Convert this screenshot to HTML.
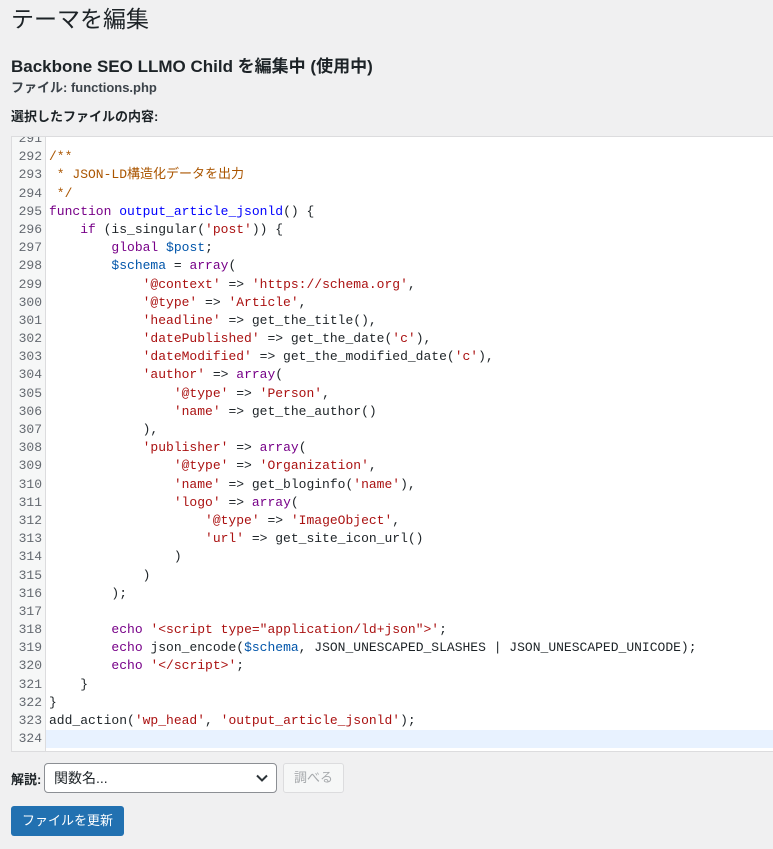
<!DOCTYPE html>
<html><head><meta charset="utf-8">
<style>
body{margin:0;background:#f0f0f1;width:773px;height:849px;overflow:hidden;font-family:"Liberation Sans","Noto Sans CJK JP",sans-serif;color:#1d2327;position:relative}
.a{position:absolute;white-space:nowrap}
h1{position:absolute;left:11px;top:3px;margin:0;font-size:23px;font-weight:400;line-height:32px}
.ed{position:absolute;left:11px;top:136px;width:770px;height:614px;background:#fff;border:1px solid #dcdcde;overflow:hidden}
.gut{position:absolute;left:0;top:0;width:33px;height:100%;background:#f6f7f7;border-right:1px solid #dcdcde}
.code{position:absolute;left:0;right:0;top:-7px;font-family:"Liberation Mono",monospace;font-size:13px;line-height:18.2px}
.ln{display:flex;height:18.2px;white-space:pre;width:100%}
.n{width:30px;text-align:right;color:#646970;flex:none}
.t{padding-left:7px}
.hl{background:#e8f2ff;margin-left:4px}
.c{color:#a50}.k{color:#708}.d{color:#00f}.s{color:#a11}.v{color:#05a}
</style></head><body>
<h1>テーマを編集</h1>
<div class="a" style="left:11px;top:52px;font-size:17px;font-weight:700">Backbone SEO LLMO Child を編集中 (使用中)</div>
<div class="a" style="left:11px;top:77px;font-size:13px;font-weight:700;color:#3c434a">ファイル: functions.php</div>
<div class="a" style="left:11px;top:106px;font-size:13px;font-weight:700">選択したファイルの内容:</div>
<div class="ed"><div class="gut"></div><div class="code">
<div class="ln"><span class="n">291</span><span class="t"></span></div>
<div class="ln"><span class="n">292</span><span class="t c">/**</span></div>
<div class="ln"><span class="n">293</span><span class="t c"> * JSON-LD構造化データを出力</span></div>
<div class="ln"><span class="n">294</span><span class="t c"> */</span></div>
<div class="ln"><span class="n">295</span><span class="t"><span class="k">function</span> <span class="d">output_article_jsonld</span>() {</span></div>
<div class="ln"><span class="n">296</span><span class="t">    <span class="k">if</span> (is_singular(<span class="s">'post'</span>)) {</span></div>
<div class="ln"><span class="n">297</span><span class="t">        <span class="k">global</span> <span class="v">$post</span>;</span></div>
<div class="ln"><span class="n">298</span><span class="t">        <span class="v">$schema</span> = <span class="k">array</span>(</span></div>
<div class="ln"><span class="n">299</span><span class="t">            <span class="s">'@context'</span> =&gt; <span class="s">'https://schema.org'</span>,</span></div>
<div class="ln"><span class="n">300</span><span class="t">            <span class="s">'@type'</span> =&gt; <span class="s">'Article'</span>,</span></div>
<div class="ln"><span class="n">301</span><span class="t">            <span class="s">'headline'</span> =&gt; get_the_title(),</span></div>
<div class="ln"><span class="n">302</span><span class="t">            <span class="s">'datePublished'</span> =&gt; get_the_date(<span class="s">'c'</span>),</span></div>
<div class="ln"><span class="n">303</span><span class="t">            <span class="s">'dateModified'</span> =&gt; get_the_modified_date(<span class="s">'c'</span>),</span></div>
<div class="ln"><span class="n">304</span><span class="t">            <span class="s">'author'</span> =&gt; <span class="k">array</span>(</span></div>
<div class="ln"><span class="n">305</span><span class="t">                <span class="s">'@type'</span> =&gt; <span class="s">'Person'</span>,</span></div>
<div class="ln"><span class="n">306</span><span class="t">                <span class="s">'name'</span> =&gt; get_the_author()</span></div>
<div class="ln"><span class="n">307</span><span class="t">            ),</span></div>
<div class="ln"><span class="n">308</span><span class="t">            <span class="s">'publisher'</span> =&gt; <span class="k">array</span>(</span></div>
<div class="ln"><span class="n">309</span><span class="t">                <span class="s">'@type'</span> =&gt; <span class="s">'Organization'</span>,</span></div>
<div class="ln"><span class="n">310</span><span class="t">                <span class="s">'name'</span> =&gt; get_bloginfo(<span class="s">'name'</span>),</span></div>
<div class="ln"><span class="n">311</span><span class="t">                <span class="s">'logo'</span> =&gt; <span class="k">array</span>(</span></div>
<div class="ln"><span class="n">312</span><span class="t">                    <span class="s">'@type'</span> =&gt; <span class="s">'ImageObject'</span>,</span></div>
<div class="ln"><span class="n">313</span><span class="t">                    <span class="s">'url'</span> =&gt; get_site_icon_url()</span></div>
<div class="ln"><span class="n">314</span><span class="t">                )</span></div>
<div class="ln"><span class="n">315</span><span class="t">            )</span></div>
<div class="ln"><span class="n">316</span><span class="t">        );</span></div>
<div class="ln"><span class="n">317</span><span class="t"></span></div>
<div class="ln"><span class="n">318</span><span class="t">        <span class="k">echo</span> <span class="s">'&lt;script type="application/ld+json"&gt;'</span>;</span></div>
<div class="ln"><span class="n">319</span><span class="t">        <span class="k">echo</span> json_encode(<span class="v">$schema</span>, JSON_UNESCAPED_SLASHES | JSON_UNESCAPED_UNICODE);</span></div>
<div class="ln"><span class="n">320</span><span class="t">        <span class="k">echo</span> <span class="s">'&lt;/script&gt;'</span>;</span></div>
<div class="ln"><span class="n">321</span><span class="t">    }</span></div>
<div class="ln"><span class="n">322</span><span class="t">}</span></div>
<div class="ln"><span class="n">323</span><span class="t">add_action(<span class="s">'wp_head'</span>, <span class="s">'output_article_jsonld'</span>);</span></div>
<div class="ln"><span class="n">324</span><span class="t hl" style="flex:1"></span></div>
</div></div>
<div class="a" style="left:11px;top:769px;font-size:13px;font-weight:700">解説:</div>
<div class="a" style="left:44px;top:763px;width:233px;height:30px;background:#fff;border:1px solid #8c8f94;border-radius:4px;box-sizing:border-box;font-size:14px;line-height:28px;padding-left:9px">関数名...
<svg style="position:absolute;right:8px;top:10px" width="12" height="8" viewBox="0 0 12 8"><path d="M1 1.5l5 5 5-5" fill="none" stroke="#2c3338" stroke-width="2"/></svg></div>
<div class="a" style="left:283px;top:763px;width:61px;height:30px;background:#f6f7f7;border:1px solid #dcdcde;border-radius:3px;box-sizing:border-box;font-size:13px;line-height:28px;text-align:center;color:#a7aaad">調べる</div>
<div class="a" style="left:11px;top:806px;width:113px;height:30px;background:#2271b1;border-radius:3px;color:#fff;font-size:13px;line-height:30px;text-align:center">ファイルを更新</div>
</body></html>
